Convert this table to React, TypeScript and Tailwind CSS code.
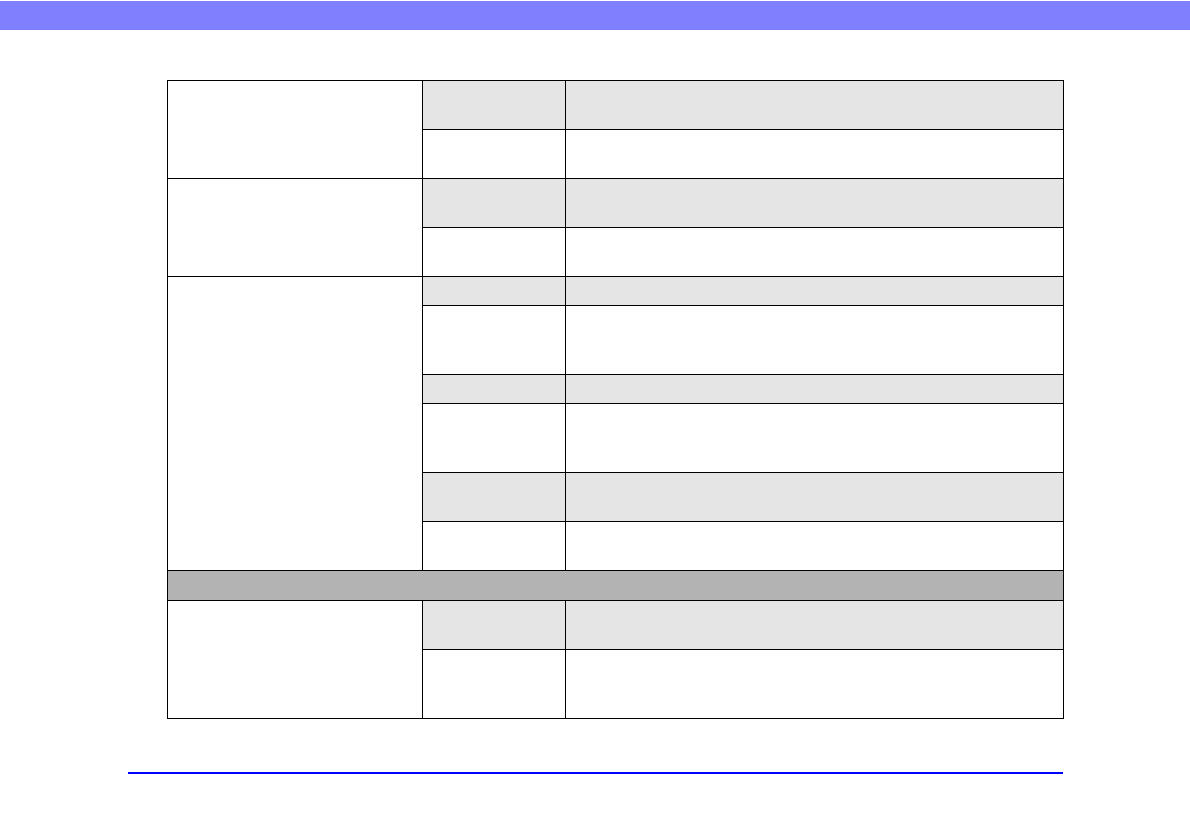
const groups: { sub: { h: number; gray: boolean }[] }[] = [
  { sub: [{ h: 49, gray: true }, { h: 49, gray: false }] },
  { sub: [{ h: 49, gray: true }, { h: 49, gray: false }] },
  {
    sub: [
      { h: 29, gray: true },
      { h: 69, gray: false },
      { h: 29, gray: true },
      { h: 69, gray: false },
      { h: 49, gray: true },
      { h: 49, gray: false },
    ],
  },
];

const lastGroup = [
  { h: 49, gray: true },
  { h: 69, gray: false },
];

function rowHeightClass(h: number) {
  if (h === 29) return "h-[29px]";
  if (h === 69) return "h-[69px]";
  return "h-[49px]";
}

export default function App() {
  return (
    <div className="w-[1190px] h-[840px] bg-white font-['Liberation_Sans',Arial,sans-serif]">
      <div className="mt-px h-[29px] w-full bg-[#8080ff]" />
      <div className="pl-[128px] pt-[50px]">
        <table className="ml-[39px] w-[896px] table-fixed border-collapse">
          <colgroup>
            <col className="w-[255px]" />
            <col className="w-[143px]" />
            <col className="w-[498px]" />
          </colgroup>
          <tbody>
            {groups.map((g, gi) =>
              g.sub.map((s, si) => (
                <tr key={`${gi}-${si}`} className={rowHeightClass(s.h)}>
                  {si === 0 && (
                    <td rowSpan={g.sub.length} className="border border-black bg-white" />
                  )}
                  <td className={`border border-black ${s.gray ? "bg-[#e5e5e5]" : "bg-white"}`} />
                  <td className={`border border-black ${s.gray ? "bg-[#e5e5e5]" : "bg-white"}`} />
                </tr>
              ))
            )}
            <tr className="h-[30px]">
              <td colSpan={3} className="border border-black bg-[#b3b3b3]" />
            </tr>
            {lastGroup.map((s, si) => (
              <tr key={`last-${si}`} className={rowHeightClass(s.h)}>
                {si === 0 && (
                  <td rowSpan={lastGroup.length} className="border border-black bg-white" />
                )}
                <td className={`border border-black ${s.gray ? "bg-[#e5e5e5]" : "bg-white"}`} />
                <td className={`border border-black ${s.gray ? "bg-[#e5e5e5]" : "bg-white"}`} />
              </tr>
            ))}
          </tbody>
        </table>
        <div className="mt-[53px] h-[2px] w-[935px] bg-[#0000ff]" />
      </div>
    </div>
  );
}
